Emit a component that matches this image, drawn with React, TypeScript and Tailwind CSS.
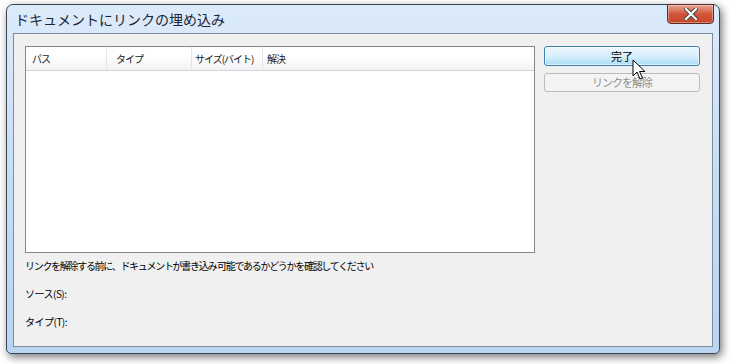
import React from "react"

const jp = { fontFamily: '"Noto Sans CJK JP", "Noto Sans", sans-serif' }

function Cursor() {
  return (
    <svg width="14" height="22" viewBox="0 0 14 22" className="absolute left-[632px] top-[59px]">
      <path d="M1 1 L1 17 L5 13 L8 20 L10.5 19 L7.5 12.5 L13 12.5 Z" fill="#fff" stroke="#000" strokeWidth="1" strokeLinejoin="round" />
    </svg>
  )
}

function CloseButton() {
  return (
    <div className="absolute right-[5px] top-[-1px] w-[47px] h-[20px] rounded-b-[4px] border border-[#5d2a24] bg-gradient-to-b from-[#e8a493] via-[#d0553b] to-[#c7442a] flex items-center justify-center shadow-[inset_0_0_0_1px_rgba(255,255,255,0.35)]">
      <svg width="14" height="12" viewBox="0 0 14 12">
        <path d="M2 1 L12 11 M12 1 L2 11" stroke="#3b3b3b" strokeWidth="4" strokeLinecap="square" />
        <path d="M2 1 L12 11 M12 1 L2 11" stroke="#fff" strokeWidth="2.2" strokeLinecap="square" />
      </svg>
    </div>
  )
}

export default function App() {
  return (
    <div className="relative w-[734px] h-[364px] bg-white overflow-hidden" style={jp}>
      {/* window */}
      <div className="absolute left-[6px] top-[4px] w-[714px] h-[350px] rounded-t-[7px] rounded-b-[5px] border border-[#3a4453] shadow-[2px_3px_8px_rgba(0,0,0,0.55)] bg-gradient-to-b from-[#dcebfa] via-[#c6ddf5] to-[#b9d5f2] flex flex-col">
        <div className="relative h-[28px] shrink-0 flex items-center pl-[8px]">
          <span className="text-[14px] text-[#1b2738] leading-none">ドキュメントにリンクの埋め込み</span>
          <CloseButton />
        </div>
        <div className="flex-1 mx-[6px] mb-[6px] border border-[#7f8c9b] bg-[#f0f0f0] flex flex-col px-[11px] pt-[12px] text-[12px] text-black">
          <div className="flex gap-[9px]">
            {/* list */}
            <div className="w-[510px] h-[207px] border border-[#828790] bg-white flex flex-col">
              <div className="h-[24px] flex items-stretch bg-gradient-to-b from-white from-40% to-[#f1f2f4] border-b border-[#d5d5d5] text-[10px] tracking-[-1px] text-[#1a1a1a] whitespace-nowrap">
                <div className="w-[81px] border-r border-[#e3e5e8] flex items-center pl-[6px]">パス</div>
                <div className="w-[85px] border-r border-[#e3e5e8] flex items-center pl-[9px]">タイプ</div>
                <div className="w-[71px] border-r border-[#e3e5e8] flex items-center pl-[3px]">サイズ(バイト)</div>
                <div className="flex-1 flex items-center pl-[4px]">解決</div>
              </div>
            </div>
            {/* buttons */}
            <div className="flex flex-col gap-[7px]">
              <div className="w-[156px] h-[20px] rounded-[3px] border border-[#3c7fb1] bg-gradient-to-b from-[#ecf7fd] via-[#d9effc] to-[#a9dcf6] flex items-center justify-center text-[11px] shadow-[inset_0_0_0_1px_rgba(255,255,255,0.6)]">
                完了
              </div>
              <div className="w-[156px] h-[19px] rounded-[3px] border border-[#b8bcbf] bg-[#f4f4f4] flex items-center justify-center text-[11px] tracking-[-1px] text-[#8f8f8f]">
                リンクを解除
              </div>
            </div>
          </div>
          <div className="mt-[6px] flex flex-col gap-[14px] text-[10px] leading-[14px] whitespace-nowrap">
            <div className="tracking-[-1.3px]">リンクを解除する前に、ドキュメントが書き込み 可能であるかどうかを確認してください</div>
            <div className="tracking-[-0.5px]">ソース(S):</div>
            <div className="tracking-[-0.5px]">タイプ(T):</div>
          </div>
        </div>
      </div>
      <Cursor />
    </div>
  )
}
